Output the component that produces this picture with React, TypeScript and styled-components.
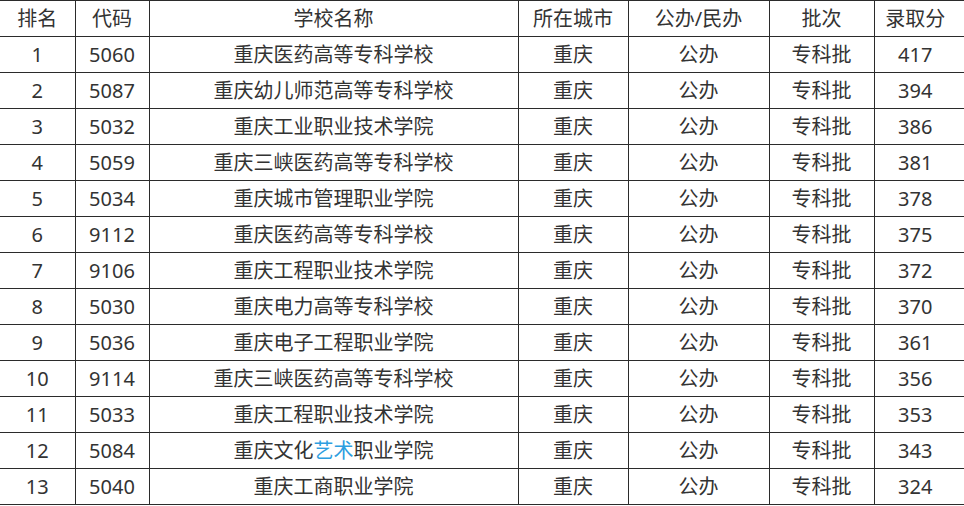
import { ReactElement } from "react";
import styled, { createGlobalStyle } from "styled-components";

const GlobalStyle = createGlobalStyle`
  html, body {
    margin: 0;
    padding: 0;
    background: #fff;
    overflow: hidden;
  }
  body {
    font-family: "Noto Sans", "Noto Sans CJK SC", sans-serif;
    color: #333;
  }
`;

const Table = styled.table`
  border-collapse: collapse;
  table-layout: fixed;
  width: 1000px;
  font-size: 20px;
  color: #333;
`;

const Col = styled.col<{ $w: number }>`
  width: ${(p) => p.$w}px;
`;

const Cell = styled.td`
  border: 1px solid #2b2b2b;
  height: 35px;
  padding: 0;
  font-weight: 400;
  text-align: center;
  vertical-align: middle;
  line-height: 35px;
  white-space: nowrap;
  &:first-child {
    border-left: none;
  }
  &:last-child {
    border-right: none;
    padding-right: 44px;
  }
`;

const HeadCell = styled(Cell).attrs({ as: "th" })`
  font-weight: 400;
`;

const Link = styled.span`
  color: #2d9ee0;
`;

const widths = [75, 74, 369, 110, 141, 105, 126];

const headers = ["排名", "代码", "学校名称", "所在城市", "公办/民办", "批次", "录取分"];

type Row = [string, string, string | ReactElement, number];

const rows: Row[] = [
  ["1", "5060", "重庆医药高等专科学校", 417],
  ["2", "5087", "重庆幼儿师范高等专科学校", 394],
  ["3", "5032", "重庆工业职业技术学院", 386],
  ["4", "5059", "重庆三峡医药高等专科学校", 381],
  ["5", "5034", "重庆城市管理职业学院", 378],
  ["6", "9112", "重庆医药高等专科学校", 375],
  ["7", "9106", "重庆工程职业技术学院", 372],
  ["8", "5030", "重庆电力高等专科学校", 370],
  ["9", "5036", "重庆电子工程职业学院", 361],
  ["10", "9114", "重庆三峡医药高等专科学校", 356],
  ["11", "5033", "重庆工程职业技术学院", 353],
  [
    "12",
    "5084",
    <>
      重庆文化<Link>艺术</Link>职业学院
    </>,
    343,
  ],
  ["13", "5040", "重庆工商职业学院", 324],
];

function App(): ReactElement {
  return (
    <>
      <GlobalStyle />
      <Table>
        <colgroup>
          {widths.map((w, i) => (
            <Col key={i} $w={w} />
          ))}
        </colgroup>
        <thead>
          <tr>
            {headers.map((h) => (
              <HeadCell key={h}>{h}</HeadCell>
            ))}
          </tr>
        </thead>
        <tbody>
          {rows.map(([rank, code, name, score]) => (
            <tr key={rank}>
              <Cell>{rank}</Cell>
              <Cell>{code}</Cell>
              <Cell>{name}</Cell>
              <Cell>重庆</Cell>
              <Cell>公办</Cell>
              <Cell>专科批</Cell>
              <Cell>{score}</Cell>
            </tr>
          ))}
        </tbody>
      </Table>
    </>
  );
}

export default App;
